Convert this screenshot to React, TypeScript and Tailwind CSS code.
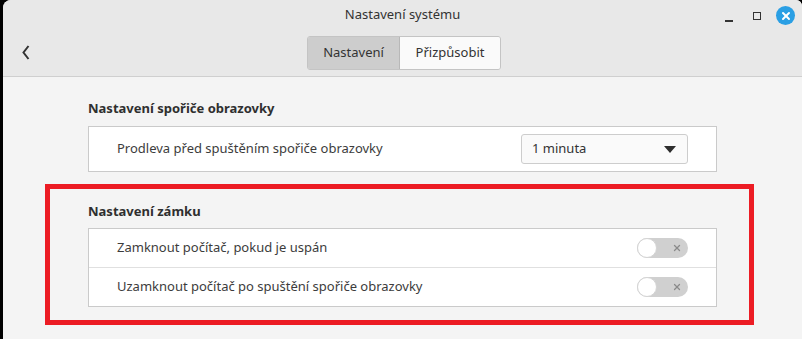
import { X } from 'lucide-react';

function Toggle() {
  return (
    <div className="relative flex h-[20px] w-[51px] items-center rounded-full bg-[#d0d0d0]">
      <div className="h-[20px] w-[20px] rounded-full border border-[#d4d4d4] bg-white" />
      <X size={10} strokeWidth={3} className="ml-auto mr-[6px] text-[#8a8a8a]" />
    </div>
  );
}

export default function App() {
  return (
    <div className="flex h-[339px] w-[802px] overflow-hidden bg-black pl-[3px] font-['Noto_Sans',sans-serif] text-[13px] text-[#3c3c3c]">
      <div className="flex flex-1 flex-col overflow-hidden rounded-tl-[8px] rounded-tr-[6px] bg-[#f4f4f4]">
        {/* Header */}
        <div className="h-[77px] shrink-0 border-b border-[#cfcfcf] bg-[#e8e8e8]">
          <div className="relative flex h-[30px] items-center justify-center">
            <span className="text-[#333]">Nastavení systému</span>
            <div className="absolute right-[7px] top-[6px] flex items-center">
              <div className="mr-[20px] mt-[10px] h-[2px] w-[8px] bg-[#333]" />
              <div className="mr-[15px] h-[8px] w-[8px] border-[1.5px] border-[#333]" />
              <div className="flex h-[19px] w-[19px] items-center justify-center rounded-full bg-[#2a9fe4]">
                <X size={12} strokeWidth={4} className="text-white" />
              </div>
            </div>
          </div>
          <div className="relative flex items-center justify-center pt-[6px]">
            <svg width="8" height="15" viewBox="0 0 8 15" className="absolute left-[19px] top-[15px]">
              <path d="M6.5 1 L1.5 7.5 L6.5 14" fill="none" stroke="#333" strokeWidth="2" />
            </svg>
            <div className="ml-[3px] flex h-[34px] overflow-hidden rounded-[3px] border border-[#c4c4c4]">
              <div className="flex w-[92px] items-center justify-center border-r border-[#b8b8b8] bg-[#cdcdcd] text-[#333]">Nastavení</div>
              <div className="flex w-[100px] items-center justify-center bg-[#fafafa] text-[#333]">Přizpůsobit</div>
            </div>
          </div>
        </div>

        {/* Content */}
        <div className="flex flex-col pl-[42px] pr-[48px]">
          <div className="ml-[43px] mr-[37px] pt-[22px]">
            <div className="mb-[9px] font-bold leading-[18px] text-[#2f2f2f]">Nastavení spořiče obrazovky</div>
            <div className="flex h-[46px] items-center border border-[#cacaca] bg-white pl-[28px] pr-[28px]">
              <span>Prodleva před spuštěním spořiče obrazovky</span>
              <div className="ml-auto flex h-[30px] w-[167px] items-center rounded-[3px] border border-[#cdcdcd] bg-[#fafafa] pl-[10px] pr-[11px]">
                <span className="text-[#333]">1 minuta</span>
                <svg width="12" height="7" viewBox="0 0 12 7" className="ml-auto">
                  <path d="M0 0 L12 0 L6 7 Z" fill="#2e2e2e" />
                </svg>
              </div>
            </div>
          </div>

          <div className="mt-[12px] border-[5px] border-[#ec1c24] pb-[13px] pl-[38px] pr-[32px] pt-[13px]">
            <div className="mb-[8px] font-bold leading-[18px] text-[#2f2f2f]">Nastavení zámku</div>
            <div className="border border-[#cacaca] bg-white">
              <div className="flex h-[39px] items-center border-b border-[#e0e0e0] pl-[28px] pr-[28px]">
                <span>Zamknout počítač, pokud je uspán</span>
                <div className="ml-auto"><Toggle /></div>
              </div>
              <div className="flex h-[38px] items-center pl-[28px] pr-[28px]">
                <span>Uzamknout počítač po spuštění spořiče obrazovky</span>
                <div className="ml-auto"><Toggle /></div>
              </div>
            </div>
          </div>
        </div>
      </div>
    </div>
  );
}
